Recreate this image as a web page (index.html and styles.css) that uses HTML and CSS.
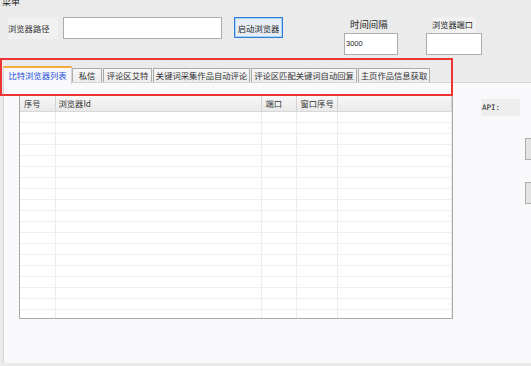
FILE: index.html
```html
<!DOCTYPE html>
<html lang="zh-CN">
<head>
    <meta charset="UTF-8">
    <meta name="viewport" content="width=device-width, initial-scale=1.0">
    <title>比特浏览器</title>
    <link rel="stylesheet" href="styles.css">
</head>
<body>
    <div class="menu"><span>菜单</span></div>

    <div class="toolbar">
        <div class="field-label">浏览器路径</div>
        <div class="path-input"></div>
        <button class="start-btn">启动浏览器</button>
        <div class="group group-time">
            <div class="group-label">时间间隔</div>
            <div class="group-input">3000</div>
        </div>
        <div class="group group-port">
            <div class="group-label port-label">浏览器端口</div>
            <div class="group-input"></div>
        </div>
    </div>

    <div class="tab-strip">
        <div class="tab active">比特浏览器列表</div>
        <div class="tab">私信</div>
        <div class="tab">评论区艾特</div>
        <div class="tab">关键词采集作品自动评论</div>
        <div class="tab">评论区匹配关键词自动回复</div>
        <div class="tab">主页作品信息获取</div>
    </div>

    <div class="panel">
        <div class="grid-wrap">
            <table class="grid">
                <colgroup>
                    <col class="c-no">
                    <col class="c-id">
                    <col class="c-port">
                    <col class="c-win">
                    <col>
                </colgroup>
                <thead>
                    <tr><th>序号</th><th>浏览器Id</th><th>端口</th><th>窗口序号</th><th></th></tr>
                </thead>
                <tbody id="rows"></tbody>
            </table>
        </div>
        <div class="side">
            <div class="api-label">API:</div>
            <div class="side-btn"></div>
            <div class="side-btn"></div>
        </div>
    </div>

    <!-- annotation box around the tab strip -->
    <div class="highlight"></div>

    <script>
        // empty grid rows
        const body = document.getElementById('rows');
        for (let i = 0; i < 20; i++) {
            const tr = document.createElement('tr');
            for (let j = 0; j < 5; j++) tr.appendChild(document.createElement('td'));
            body.appendChild(tr);
        }
    </script>
</body>
</html>
```

FILE: styles.css
```css
body {
    margin: 0;
    background-color: #ebebeb;
    font-family: "Noto Sans CJK SC", "Liberation Sans", sans-serif;
    font-size: 8.3px;
    color: #222;
    width: 531px;
    height: 366px;
    overflow: hidden;
    position: relative;
}
.menu {
    height: 21px;
    padding-left: 2px;
}
.menu span {
    display: block;
    margin-top: -4px;
    line-height: 12px;
    font-size: 9px;
}
.toolbar {
    display: flex;
    align-items: flex-start;
    height: 49px;
}
.field-label {
    margin-left: 8px;
    width: 50px;
    height: 22px;
    line-height: 22px;
    background-color: #f0f0f0;
    color: #333;
}
.path-input {
    margin-left: 5px;
    width: 159px;
    height: 22px;
    box-sizing: border-box;
    border: 1px solid #adadad;
    background-color: #fff;
}
.start-btn {
    margin-left: 12px;
    width: 49px;
    height: 21px;
    padding: 0;
    box-sizing: border-box;
    border: 1px solid #2f7fd8; /* focused button */
    box-shadow: inset 0 0 0 1px #a9d0f5;
    background-color: #e8eef5;
    font-family: inherit;
    font-size: 8.3px;
    color: #222;
}
.group {
    display: flex;
    flex-direction: column;
}
.group-time {
    margin-left: 61px;
    width: 54px;
}
.group-port {
    margin-left: 28px;
    width: 56px;
}
.group-label {
    height: 16px;
    line-height: 13px;
    font-size: 9.4px;
    padding-left: 6px;
    padding-top: 1px;
    box-sizing: border-box;
}
.port-label {
    margin-left: 6px;
    width: 44px;
    padding-left: 0;
    padding-top: 0;
    line-height: 15px;
    font-size: 8.2px;
    background-color: #f2f2f2;
}
.group-input {
    height: 22px;
    box-sizing: border-box;
    border: 1px solid #adadad;
    background-color: #fff;
    line-height: 20px;
    padding-left: 1px;
    font-family: "Liberation Sans", sans-serif;
    font-size: 7.5px;
}
.tab-strip {
    display: flex;
    align-items: flex-end;
    height: 16px;
    padding-left: 3px;
    position: relative;
    z-index: 1;
}
.tab {
    height: 14px;
    box-sizing: border-box;
    margin-right: 1px;
    border: 1px solid #acacac;
    border-bottom: none;
    background: linear-gradient(#f7f7f7, #ececec);
    text-align: center;
    line-height: 13px;
    color: #333;
}
.tab:nth-child(1) { width: 69px; margin-right: 0; }
.tab:nth-child(2) { width: 30px; }
.tab:nth-child(3) { width: 49px; }
.tab:nth-child(4) { width: 97px; }
.tab:nth-child(5) { width: 106px; }
.tab:nth-child(6) { width: 72px; }
.tab.active {
    height: 18px;
    margin-bottom: -2px;
    border: 1px solid #d4d4d4;
    border-top: 2px solid #f5ab3c;
    border-bottom: none;
    background-color: #f9f9fb;
    background-image: none;
    color: #1f4fe0;
    line-height: 14px;
}
.panel {
    display: flex;
    margin-left: 3px;
    height: 280px;
    border-top: 1px solid #d4d4d4;
    border-left: 1px solid #d4d4d4;
    background-color: #f9f9fb;
}
.grid-wrap {
    flex-shrink: 0;
    margin-left: 15px;
    margin-top: 11px;
    width: 434px;
    height: 225px;
    box-sizing: border-box;
    border: 1px solid #a9a9a9;
    background-color: #fff;
    overflow: hidden;
}
.grid {
    width: 100%;
    border-collapse: collapse;
    table-layout: fixed;
}
.c-no { width: 35px; }
.c-id { width: 206px; }
.c-port { width: 35px; }
.c-win { width: 41px; }
.grid th {
    height: 16px;
    padding: 0 0 0 4px;
    text-align: left;
    font-weight: normal;
    color: #333;
    background: linear-gradient(#f8f8f8, #e9e9e9);
    border-right: 1px solid #d3d3d3;
    border-bottom: 1px solid #d8d8d8;
}
.grid th:nth-child(2) { padding-left: 3px; }
.grid td {
    height: 10px;
    padding: 0;
    border-right: 1px solid #ececec;
    border-bottom: 1px solid #efefef;
}
.side {
    flex-shrink: 0;
    margin-left: 28px;
    padding-top: 16px;
}
.api-label {
    width: 39px;
    height: 17px;
    line-height: 17px;
    padding-left: 1px;
    box-sizing: border-box;
    background-color: #eeeeee;
    font-family: "DejaVu Sans Mono", monospace;
    font-size: 7.5px;
}
.side-btn {
    margin-left: 44px;
    margin-top: 22px;
    width: 20px;
    height: 22px;
    box-sizing: border-box;
    border: 1px solid #adadad;
    background-color: #e4e4e4;
}
.highlight {
    position: absolute;
    left: 0;
    top: 58px;
    width: 453px;
    height: 38px;
    box-sizing: border-box;
    border: 2px solid #ef3434;
    z-index: 2;
}
```
